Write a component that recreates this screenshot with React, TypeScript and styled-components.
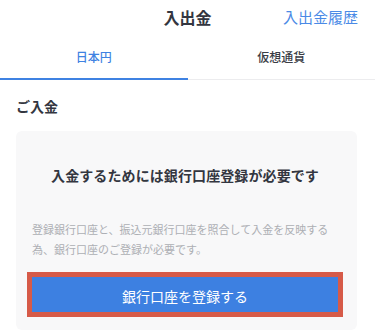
import React, { useState } from "react";
import styled, { createGlobalStyle } from "styled-components";

const GlobalStyle = createGlobalStyle`
  html, body {
    margin: 0;
    padding: 0;
    background: #ffffff;
  }
  body {
    font-family: "Noto Sans CJK JP", "Noto Sans", sans-serif;
    color: #333640;
    -webkit-font-smoothing: antialiased;
  }
`;

const Page = styled.div`
  width: 375px;
  height: 331px;
  overflow: hidden;
  background: #ffffff;
`;

const Header = styled.header`
  position: relative;
  height: 36px;
  display: flex;
  align-items: center;
  justify-content: center;
`;

const Title = styled.h1`
  margin: 0;
  font-size: 16px;
  line-height: 20px;
  font-weight: 700;
  color: #333640;
  padding-bottom: 2px;
`;

const HistoryLink = styled.a`
  position: absolute;
  right: 17px;
  top: 7px;
  font-size: 15px;
  line-height: 20px;
  color: #4a8ae6;
  text-decoration: none;
`;

const Tabs = styled.nav`
  display: flex;
  height: 43px;
  border-bottom: 1px solid #ececee;
`;

const Tab = styled.button<{ $active?: boolean }>`
  flex: 1;
  border: none;
  background: none;
  padding: 0;
  margin: 0 0 -1px;
  font-family: inherit;
  font-size: 12px;
  line-height: 16px;
  font-weight: 500;
  color: ${({ $active }) => ($active ? "#3f82e2" : "#3a3d45")};
  border-bottom: 2px solid ${({ $active }) => ($active ? "#3f82e2" : "transparent")};
  cursor: pointer;
`;

const Section = styled.section`
  padding: 0 18px 0 16px;
`;

const SectionTitle = styled.h2`
  margin: 0;
  padding: 16px 0 15px;
  font-size: 14px;
  line-height: 20px;
  font-weight: 700;
  color: #333640;
`;

const Card = styled.div`
  background: #f8f8f9;
  border-radius: 6px;
  padding: 34px 19px 18px 16px;
`;

const CardTitle = styled.p`
  margin: 0;
  font-size: 14px;
  line-height: 20px;
  font-weight: 700;
  color: #333640;
  text-align: center;
  letter-spacing: 0.1px;
`;

const Note = styled.p`
  margin: 34px 0 0;
  font-size: 11px;
  line-height: 20px;
  color: #adafb4;
`;

const RegisterButton = styled.button`
  display: block;
  width: 100%;
  height: 35px;
  margin-top: 18px;
  border: none;
  border-radius: 0;
  background: #3d80e1;
  color: #ffffff;
  font-family: inherit;
  font-size: 14px;
  line-height: 20px;
  padding: 2px 0 0;
  outline: 5px solid #d65a48;
  cursor: pointer;
`;

export default function App() {
  const [tab, setTab] = useState(0);
  return (
    <Page>
      <GlobalStyle />
      <Header>
        <Title>入出金</Title>
        <HistoryLink href="#">入出金履歴</HistoryLink>
      </Header>
      <Tabs>
        <Tab $active={tab === 0} onClick={() => setTab(0)}>
          日本円
        </Tab>
        <Tab $active={tab === 1} onClick={() => setTab(1)}>
          仮想通貨
        </Tab>
      </Tabs>
      <Section>
        <SectionTitle>ご入金</SectionTitle>
        <Card>
          <CardTitle>入金するためには銀行口座登録が必要です</CardTitle>
          <Note>
            登録銀行口座と、振込元銀行口座を照合して入金を反映する為、銀行口座のご登録が必要です。
          </Note>
          <RegisterButton>銀行口座を登録する</RegisterButton>
        </Card>
      </Section>
    </Page>
  );
}
